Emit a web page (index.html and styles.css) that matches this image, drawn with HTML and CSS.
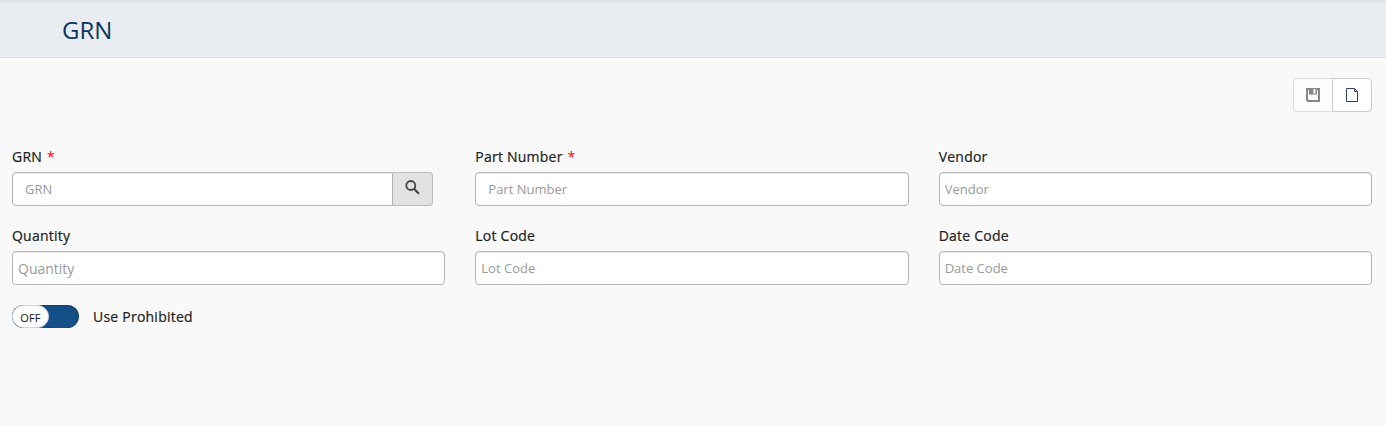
FILE: index.html
```html
<!DOCTYPE html>
<html lang="en">
<head>
<meta charset="utf-8">
<title>GRN</title>
<link rel="stylesheet" href="styles.css">
</head>
<body>
<header class="page-header"><h1>GRN</h1></header>
<main>
  <div class="toolbar">
    <button class="tool disabled" aria-label="Save"><svg width="14" height="14" viewBox="0 0 14 14"><path d="M1 1h12v12H2L1 12z" fill="none" stroke="currentColor" stroke-width="2"/><path d="M3 1h8v5.5H3z" fill="currentColor"/><path d="M7.500 1H9.500v4.500H7.500z" fill="#fcfcfc"/></svg></button>
    <button class="tool" aria-label="New"><svg width="14" height="14" viewBox="0 0 14 14"><path d="M1.5.5h8l3 3v10h-11zM9.500.5v3h3" fill="none" stroke="currentColor"/></svg></button>
  </div>
  <form class="grid">
    <div class="field"><label>GRN <span class="req">*</span></label>
      <div class="group"><input class="wide" placeholder="GRN"><button type="button" class="search" aria-label="Search"><svg width="15" height="15" viewBox="0 0 15 15"><circle cx="5.8" cy="5.5" r="4.5" fill="none" stroke="currentColor" stroke-width="1.8"/><path d="M9 8.700l5 5" stroke="currentColor" stroke-width="2.2"/></svg></button></div></div>
    <div class="field"><label>Part Number <span class="req">*</span></label><input class="wide" placeholder="Part Number"></div>
    <div class="field"><label>Vendor</label><input placeholder="Vendor"></div>
    <div class="field"><label>Quantity</label><input class="quantity" placeholder="Quantity"></div>
    <div class="field"><label>Lot Code</label><input placeholder="Lot Code"></div>
    <div class="field"><label>Date Code</label><input placeholder="Date Code"></div>
  </form>
  <div class="switch-row"><span class="switch"><span class="knob">OFF</span></span><span>Use Prohibited</span></div>
</main>
</body>
</html>
```
FILE: styles.css
```css
* { box-sizing: border-box; }
body { margin: 0; height: 426px; background: #f9f9f9; color: #222; font: 500 14px/20px "Open Sans", sans-serif; letter-spacing: .23px; -webkit-text-stroke: .22px currentColor; }
.page-header { height: 58px; padding: 11px 62px; background: #e9ecf0; border-top: 2px solid #dfe3e9; border-bottom: 1px solid #d9dfe3; }
h1 { margin: 0; color: #0b3560; font-size: 24px; line-height: 33px; font-weight: 400; letter-spacing: 0; -webkit-text-stroke: 0; }
main { padding: 20px 14px 0 12px; }
.toolbar { display: flex; justify-content: flex-end; }
.tool { width: 40px; height: 34px; padding: 0; display: flex; align-items: center; justify-content: center; border: 1px solid #ccc; border-radius: 0 4px 4px 0; background: #fff; color: #35406a; }
.tool.disabled { width: 39px; border-right: 0; border-color: #ddd; border-radius: 4px 0 0 4px; background: #fcfcfc; color: #858585; }
.grid { display: grid; grid-template-columns: repeat(3, 1fr); column-gap: 30px; row-gap: 20px; margin-top: 35px; }
.field { height: 59px; }
label { display: block; height: 25px; }
.req { color: #f00; margin-left: 1px; font-weight: 400; -webkit-text-stroke: 0; }
input { display: block; width: 100%; height: 34px; padding: 0 5px; border: 1px solid #b3b5b8; border-radius: 4px; background: #fff; font: 400 13px "Open Sans", sans-serif; box-shadow: inset 0 1px 1px rgba(0,0,0,.08); -webkit-text-stroke: 0; }
input::placeholder { color: #999; opacity: 1; }
.wide { padding: 0 12px; }
.quantity { font-size: 14px; }
.group { display: flex; margin-right: 12px; }
.group input { border-radius: 4px 0 0 4px; }
.search { flex: 0 0 40px; height: 34px; padding: 0 0 4px; display: flex; align-items: center; justify-content: center; border: 1px solid #bbb; border-left: 0; border-radius: 0 4px 4px 0; background: #e1e2e4; color: #444; }
.switch-row { display: flex; align-items: center; gap: 14px; margin-top: 20px; height: 23px; }
.switch { width: 67px; height: 23px; border-radius: 12px; background: #144f87; box-shadow: inset 0 1px 3px rgba(0,0,0,.2); }
.knob { display: block; width: 37px; height: 23px; border: 1px solid #ccd8e5; border-radius: 12px; background: #fff; color: #222; font-size: 11px; line-height: 24px; text-align: center; letter-spacing: .15px; -webkit-text-stroke: .1px currentColor; }
```
